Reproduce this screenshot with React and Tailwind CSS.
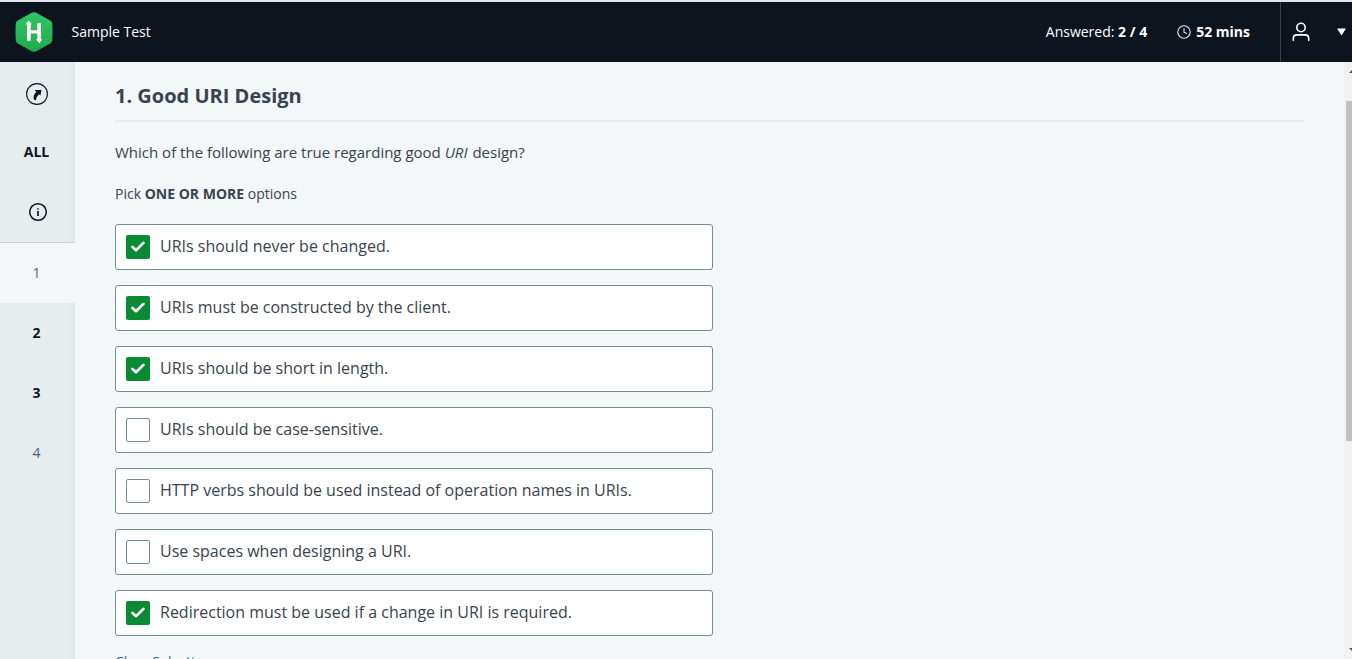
import React from "react";

const options = [
  { text: "URIs should never be changed.", checked: true },
  { text: "URIs must be constructed by the client.", checked: true },
  { text: "URIs should be short in length.", checked: true },
  { text: "URIs should be case-sensitive.", checked: false },
  { text: "HTTP verbs should be used instead of operation names in URIs.", checked: false },
  { text: "Use spaces when designing a URI.", checked: false },
  { text: "Redirection must be used if a change in URI is required.", checked: true },
];

function Logo() {
  return (
    <svg width="38" height="40" viewBox="0 0 38 40" className="block">
      <defs>
        <linearGradient id="hex" x1="0" y1="0" x2="0" y2="1">
          <stop offset="0" stopColor="#32c766" />
          <stop offset="1" stopColor="#1fa84c" />
        </linearGradient>
      </defs>
      <path
        d="M17.2 .6Q19-.2 20.8 .6L35.6 8.700Q37 9.600 37.200 11.400Q37.800 20 37.200 28.600Q37 30.400 35.600 31.300L20.800 39.400Q19 40.200 17.200 39.400L2.400 31.300Q1 30.400 .8 28.600Q.2 20 .8 11.400Q1 9.600 2.400 8.700Z"
        fill="url(#hex)"
      />
      <path
        d="M13.700 8.400L17 12.400H15.700V18.200H22.300V11.200H26V27.200H27.600L24.300 31.200L20.900 27.200H22.300V21.600H15.700V28.800H12V12.400H10.400Z"
        fill="#fff"
      />
    </svg>
  );
}

function Header() {
  return (
    <header className="flex h-[60px] shrink-0 items-center bg-[#0e141e] text-sm text-white">
      <div className="ml-[14.5px]">
        <Logo />
      </div>
      <div className="ml-[19px]">Sample Test</div>
      <div className="ml-auto">
        Answered: <b>2 / 4</b>
      </div>
      <div className="ml-[30px] flex items-center">
        <svg width="14" height="14" viewBox="0 0 14 14" fill="none" stroke="#e8edf0" strokeWidth="1.100" className="mr-[5px]">
          <circle cx="7" cy="7" r="6.200" />
          <path d="M7 3.200V7.200L9.800 8.600" />
        </svg>
        <b>52 mins</b>
      </div>
      <div className="ml-[30px] flex h-full w-[72px] items-center border-l border-[#39424e] pl-[11px]">
        <svg width="18" height="20" viewBox="0 0 18 20" fill="none" stroke="#fff" strokeWidth="1.600" strokeLinecap="round">
          <circle cx="9" cy="5.500" r="4.200" />
          <path d="M1.300 18.200V16.500Q1.300 12.900 4.900 12.900H13.100Q16.700 12.900 16.700 16.500V18.200" />
        </svg>
        <svg width="9" height="8" viewBox="0 0 9 8" className="ml-[26.500px]">
          <path d="M.8 .5H8.200Q8.900 .5 8.500 1.200L5 6.800Q4.500 7.400 4 6.800L.5 1.200Q.1 .5 .8 .5Z" fill="#fff" />
        </svg>
      </div>
    </header>
  );
}

function Sidebar() {
  return (
    <nav className="flex w-[75px] shrink-0 flex-col bg-[linear-gradient(to_right,#e5edee_69px,#dfe8e9_75px)] text-center text-sm font-bold text-[#0e141e]">
      <div className="flex h-[60px] items-center justify-center pt-1 pr-px">
        <svg width="22" height="22" viewBox="0 0 22 22">
          <circle cx="11" cy="11" r="10.400" fill="none" stroke="#0e141e" strokeWidth="1.100" />
          <path d="M8.800 7H15.500L14.400 12.500L13 11.300Q10.600 13.300 9.800 17.200L8.200 17Q6.300 12.200 10.400 8.900Z" fill="#0e141e" />
        </svg>
      </div>
      <div className="flex h-[60px] items-center justify-center pr-[2px]">ALL</div>
      <div className="flex h-[61px] items-center justify-center border-b border-[#c8d3d5] pl-px">
        <svg width="20" height="20" viewBox="0 0 20 20" fill="none" stroke="#0e141e">
          <circle cx="10" cy="10" r="8.300" strokeWidth="1.500" />
          <path d="M10 6.200V7.500M10 9V14" strokeWidth="1.700" />
        </svg>
      </div>
      <div className="flex h-[60px] items-center justify-center bg-[#f3f7f7] pr-[2px] font-normal text-[#576871]">1</div>
      <div className="flex h-[60px] items-center justify-center pr-[2px]">2</div>
      <div className="flex h-[60px] items-center justify-center pr-[2px]">3</div>
      <div className="flex h-[60px] items-center justify-center pr-[2px] font-normal text-[#39687f]">4</div>
    </nav>
  );
}

function Option({ text, checked }) {
  return (
    <label className="flex h-[46px] w-[598px] items-center rounded-[3px] border border-[#738f93] bg-white pl-[10px]">
      {checked ? (
        <span className="flex size-6 items-center justify-center rounded-[2px] bg-[#0b8a36]">
          <svg width="14" height="11" viewBox="0 0 14 11" fill="none" stroke="#fff" strokeWidth="2.700" strokeLinecap="round" strokeLinejoin="round" className="mb-px">
            <path d="M1.500 6L5 9.200L12.400 1.900" />
          </svg>
        </span>
      ) : (
        <span className="size-6 rounded-[2px] border border-[#738f93] bg-white" />
      )}
      <span className="ml-[10px] pb-[2px] text-base">{text}</span>
    </label>
  );
}

function Scrollbar() {
  return (
    <div className="flex w-2 shrink-0 flex-col overflow-hidden bg-[#f1f1f1] pl-[2px]">
      <svg width="6" height="39" viewBox="0 0 6 39" className="shrink-0">
        <path d="M3 11L7 7V11Z" fill="#505050" />
      </svg>
      <div className="h-[340px] shrink-0 bg-[#c1c1c1]" />
      <svg width="6" height="12" viewBox="0 0 6 12" className="mt-auto shrink-0">
        <path d="M3 1H7V5Z" fill="#505050" />
      </svg>
    </div>
  );
}

export default function App() {
  return (
    <div className="flex h-[659px] w-[1352px] flex-col overflow-hidden border-t-2 border-[#e3e6e8] bg-[#f3f7f7] font-['Open_Sans',sans-serif] text-[#39424e]">
      <Header />
      <div className="flex min-h-0 flex-1">
        <Sidebar />
        <main className="min-w-0 flex-1 overflow-hidden px-10 pt-[18px]">
          <h1 className="h-[42px] border-b-2 border-[#e5edee] text-[20px] leading-[32px] font-bold">1. Good URI Design</h1>
          <p className="mt-[18px] text-[15px] leading-6">
            Which of the following are true regarding good <i>URI</i> <span className="ml-px">design?</span>
          </p>
          <p className="mt-5 text-sm leading-[20px]">
            Pick <b>ONE OR MORE</b> options
          </p>
          <div className="mt-5 flex flex-col gap-[15px]">
            {options.map((o) => (
              <Option key={o.text} {...o} />
            ))}
          </div>
          <div className="mt-4 text-sm leading-5 text-[#39687f]">Clear Selection</div>
        </main>
        <Scrollbar />
      </div>
    </div>
  );
}
